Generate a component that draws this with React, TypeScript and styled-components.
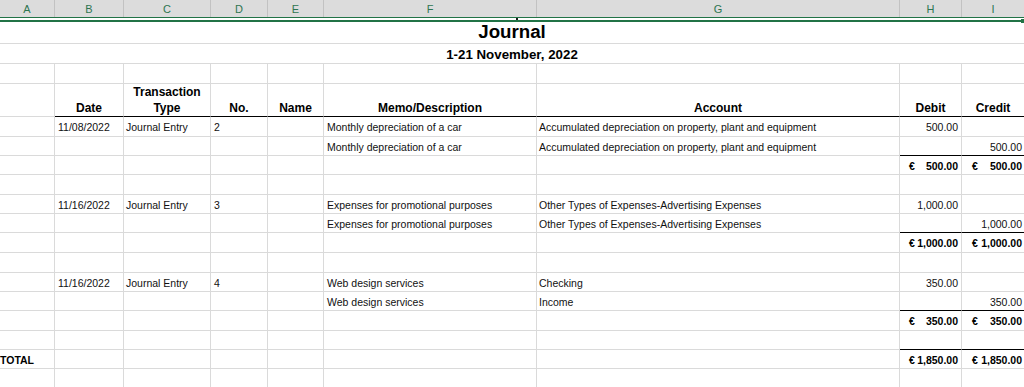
import React from 'react';
import styled, { createGlobalStyle } from 'styled-components';

const GRID = '#dadada';
const GREEN = '#217346';
const COLS = '55px 69px 87px 57px 56px 213px 363px 62px 62px';

const GlobalStyle = createGlobalStyle`
  html, body { margin: 0; padding: 0; background: #fff; }
  body { font-family: "Liberation Sans", Arial, sans-serif; overflow: hidden; }
`;

const Sheet = styled.div`
  position: relative;
  width: 1024px;
  height: 387px;
  overflow: hidden;
  background: #fff;
  color: #111;
`;

const ColumnBar = styled.div`
  display: grid;
  grid-template-columns: ${COLS};
  height: 18px;
  box-sizing: border-box;
  background: #dcdcdc;
  border-bottom: 1px solid ${GREEN};
`;

const ColumnLetter = styled.div<{ $last?: boolean }>`
  display: flex;
  align-items: center;
  justify-content: center;
  box-sizing: border-box;
  border-right: ${(p) => (p.$last ? 'none' : '1px solid #c2c2c2')};
  font-size: 11px;
  color: #2d7550;
`;

const SelectionRule = styled.div`
  height: 4px;
  box-sizing: border-box;
  border-bottom: 2px solid ${GREEN};
`;

const Marker = styled.div<{ $x: number; $y: number; $w: number; $h: number; $c: string }>`
  position: absolute;
  left: ${(p) => p.$x}px;
  top: ${(p) => p.$y}px;
  width: ${(p) => p.$w}px;
  height: ${(p) => p.$h}px;
  background: ${(p) => p.$c};
`;

const Row = styled.div<{ $h: number }>`
  display: grid;
  grid-template-columns: ${COLS};
  height: ${(p) => p.$h}px;
`;

const MergedCell = styled.div<{ $size: number; $pb: number }>`
  grid-column: 1 / -1;
  box-sizing: border-box;
  display: flex;
  align-items: flex-end;
  justify-content: center;
  padding-bottom: ${(p) => p.$pb}px;
  border-bottom: 1px solid ${GRID};
  font-size: ${(p) => p.$size}px;
  font-weight: bold;
  line-height: 1;
  color: #000;
`;

type Align = 'left' | 'center' | 'right';

const Cell = styled.div<{
  $align?: Align;
  $bold?: boolean;
  $black?: boolean;
  $noRight?: boolean;
  $pl?: number;
  $pr?: number;
}>`
  box-sizing: border-box;
  display: flex;
  align-items: center;
  justify-content: ${(p) =>
    p.$align === 'right' ? 'flex-end' : p.$align === 'center' ? 'center' : 'flex-start'};
  padding-left: ${(p) => p.$pl ?? 2}px;
  padding-right: ${(p) => p.$pr ?? 2}px;
  padding-top: 1px;
  border-right: ${(p) => (p.$noRight ? 'none' : `1px solid ${GRID}`)};
  border-bottom: 1px solid ${(p) => (p.$black ? '#000' : GRID)};
  font-size: 10.5px;
  line-height: 12px;
  font-weight: ${(p) => (p.$bold ? 'bold' : 'normal')};
  color: ${(p) => (p.$bold ? '#000' : '#111')};
  white-space: nowrap;
  overflow: hidden;
`;

const HeadCell = styled.div<{ $black?: boolean; $noRight?: boolean }>`
  box-sizing: border-box;
  display: flex;
  align-items: flex-end;
  justify-content: center;
  text-align: center;
  border-right: ${(p) => (p.$noRight ? 'none' : `1px solid ${GRID}`)};
  border-bottom: 1px solid ${(p) => (p.$black ? '#000' : GRID)};
  font-size: 12px;
  font-weight: bold;
  line-height: 16px;
  color: #000;
`;

const Money = styled(Cell)`
  justify-content: space-between;
  font-weight: bold;
  color: #000;
`;

const COLUMN_LETTERS = ['A', 'B', 'C', 'D', 'E', 'F', 'G', 'H', 'I'];

type Line = { memo: string; account: string; debit?: string; credit?: string };
type Group = {
  date: string;
  no: string;
  lines: Line[];
  total: string;
  heights: [number, number, number, number];
};

const GROUPS: Group[] = [
  {
    date: '11/08/2022',
    no: '2',
    lines: [
      { memo: 'Monthly depreciation of a car', account: 'Accumulated depreciation on property, plant and equipment', debit: '500.00' },
      { memo: 'Monthly depreciation of a car', account: 'Accumulated depreciation on property, plant and equipment', credit: '500.00' },
    ],
    total: '500.00',
    heights: [20, 19, 19, 20],
  },
  {
    date: '11/16/2022',
    no: '3',
    lines: [
      { memo: 'Expenses for promotional purposes', account: 'Other Types of Expenses-Advertising Expenses', debit: '1,000.00' },
      { memo: 'Expenses for promotional purposes', account: 'Other Types of Expenses-Advertising Expenses', credit: '1,000.00' },
    ],
    total: '1,000.00',
    heights: [19, 19, 20, 20],
  },
  {
    date: '11/16/2022',
    no: '4',
    lines: [
      { memo: 'Web design services', account: 'Checking', debit: '350.00' },
      { memo: 'Web design services', account: 'Income', credit: '350.00' },
    ],
    total: '350.00',
    heights: [19, 19, 20, 19],
  },
];

const EmptyCells: React.FC<{ from: number; to: number; blackFrom?: number }> = ({ from, to, blackFrom }) => (
  <>
    {Array.from({ length: to - from + 1 }, (_, i) => {
      const col = from + i;
      return <Cell key={col} $noRight={col === 8} $black={blackFrom !== undefined && col >= blackFrom} />;
    })}
  </>
);

const Amount: React.FC<{ value: string; last?: boolean }> = ({ value, last }) => (
  <Money $pl={last ? 10 : 9} $pr={last ? 2 : 3} $noRight={last}>
    <span>€</span>
    <span>{value}</span>
  </Money>
);

const GroupRows: React.FC<{ g: Group }> = ({ g }) => (
  <>
    {g.lines.map((l, i) => (
      <Row key={i} $h={g.heights[i]}>
        <Cell />
        <Cell $pl={3}>{i === 0 ? g.date : ''}</Cell>
        <Cell $pl={2}>{i === 0 ? 'Journal Entry' : ''}</Cell>
        <Cell $pl={3}>{i === 0 ? g.no : ''}</Cell>
        <Cell />
        <Cell $pl={3}>{l.memo}</Cell>
        <Cell $pl={2}>{l.account}</Cell>
        <Cell $align="right" $pr={3} $black={i === 1}>{l.debit ?? ''}</Cell>
        <Cell $align="right" $pr={2} $noRight $black={i === 1}>{l.credit ?? ''}</Cell>
      </Row>
    ))}
    <Row $h={g.heights[2]}>
      <EmptyCells from={0} to={6} />
      <Amount value={g.total} />
      <Amount value={g.total} last />
    </Row>
  </>
);

export default function App() {
  return (
    <Sheet>
      <GlobalStyle />
      <ColumnBar>
        {COLUMN_LETTERS.map((c, i) => (
          <ColumnLetter key={c} $last={i === COLUMN_LETTERS.length - 1}>
            {c}
          </ColumnLetter>
        ))}
      </ColumnBar>
      <SelectionRule />
      <Marker $x={516} $y={18} $w={2} $h={2} $c="#1a1a1a" />
      <Marker $x={1021} $y={19} $w={3} $h={4} $c={GREEN} />

      <Row $h={22}>
        <MergedCell $size={18.7} $pb={1}>Journal</MergedCell>
      </Row>
      <Row $h={20}>
        <MergedCell $size={13.3} $pb={2}>1-21 November, 2022</MergedCell>
      </Row>
      <Row $h={20}>
        <EmptyCells from={0} to={8} />
      </Row>
      <Row $h={33}>
        <HeadCell />
        <HeadCell $black>Date</HeadCell>
        <HeadCell $black>
          Transaction
          <br />
          Type
        </HeadCell>
        <HeadCell $black>No.</HeadCell>
        <HeadCell $black>Name</HeadCell>
        <HeadCell $black>Memo/Description</HeadCell>
        <HeadCell $black>Account</HeadCell>
        <HeadCell $black>Debit</HeadCell>
        <HeadCell $black $noRight>Credit</HeadCell>
      </Row>

      {GROUPS.map((g, gi) => (
        <React.Fragment key={gi}>
          <GroupRows g={g} />
          <Row $h={g.heights[3]}>
            <EmptyCells from={0} to={8} blackFrom={gi === GROUPS.length - 1 ? 7 : undefined} />
          </Row>
        </React.Fragment>
      ))}

      <Row $h={19}>
        <Cell $bold $pl={0} $pr={0}>TOTAL</Cell>
        <EmptyCells from={1} to={6} />
        <Amount value="1,850.00" />
        <Amount value="1,850.00" last />
      </Row>
      <Row $h={19}>
        <EmptyCells from={0} to={8} />
      </Row>
    </Sheet>
  );
}
